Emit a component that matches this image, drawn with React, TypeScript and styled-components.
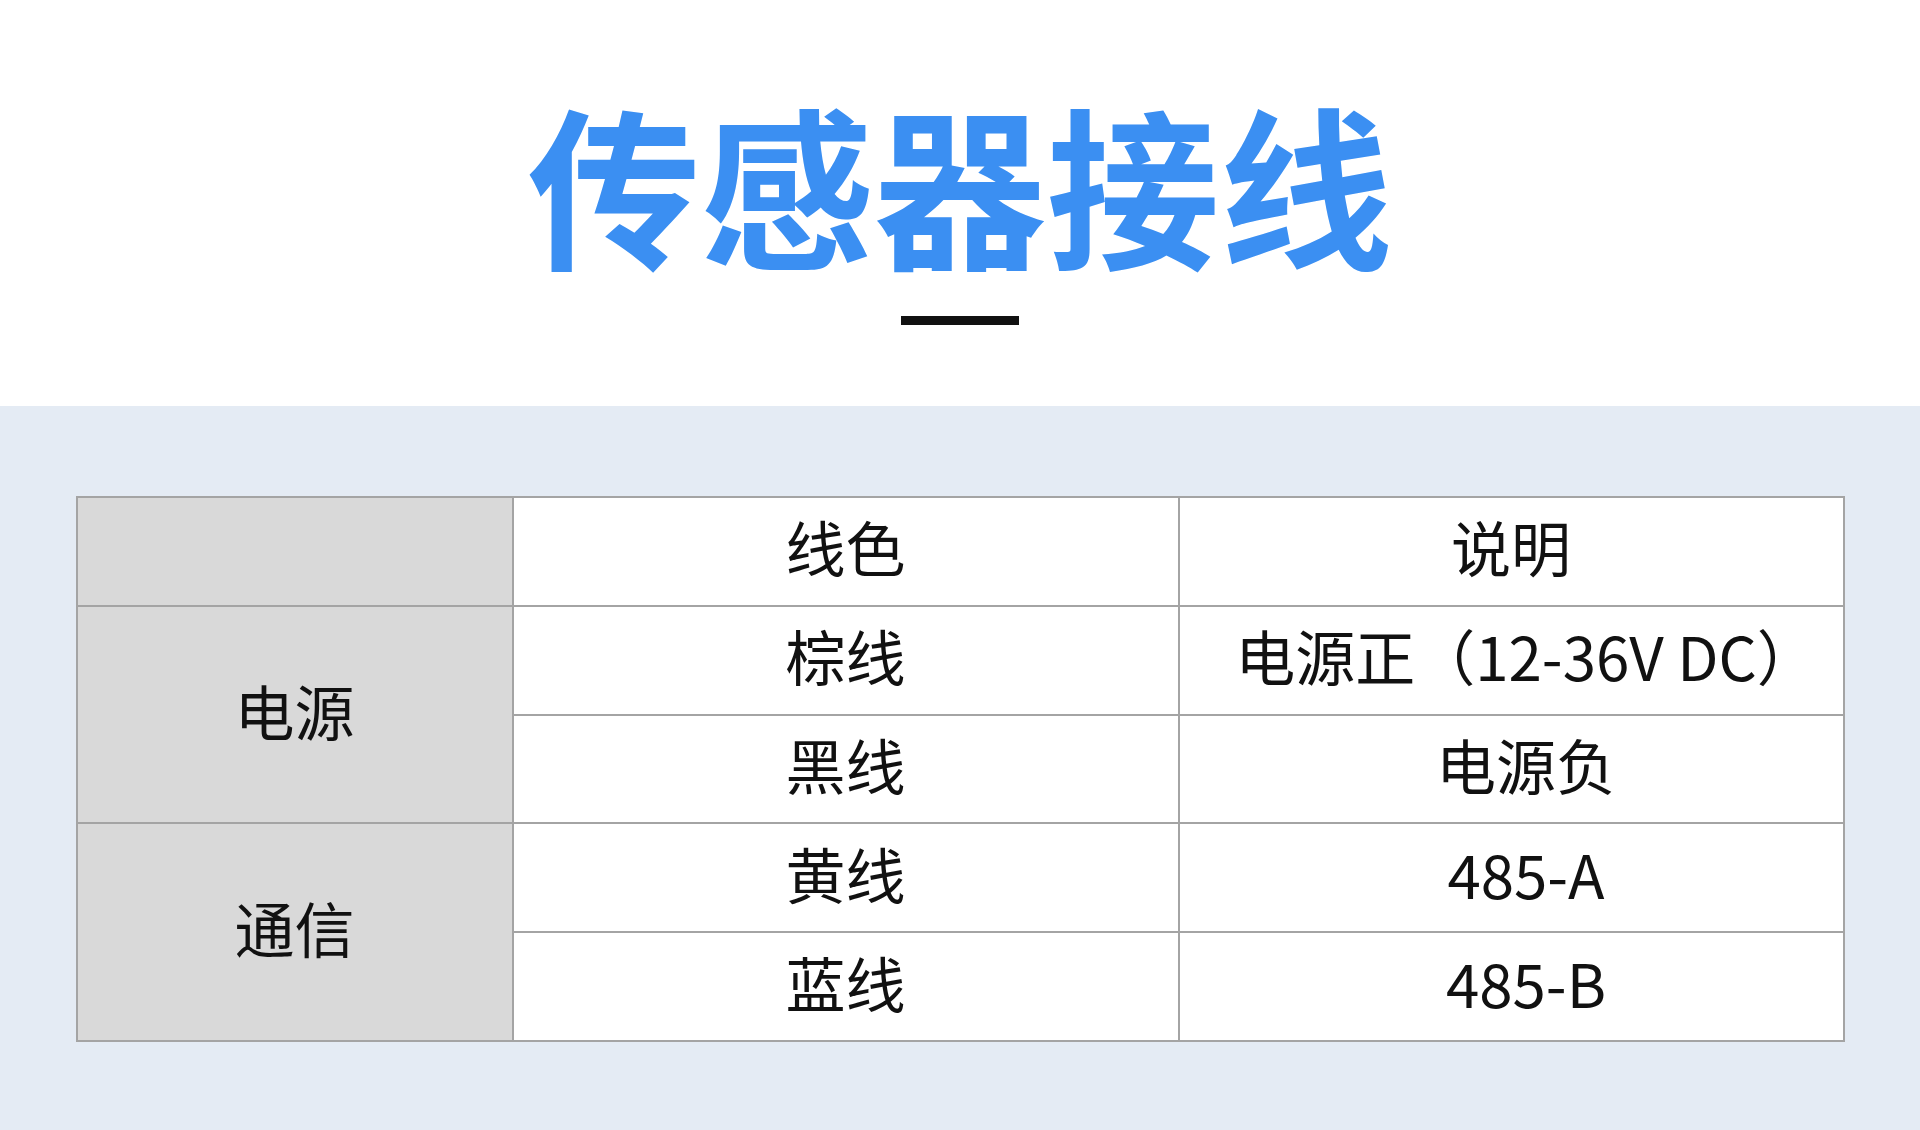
import React from 'react';
import styled, { createGlobalStyle } from 'styled-components';

const GlobalStyle = createGlobalStyle`
  html, body {
    margin: 0;
    padding: 0;
    background: #e4ebf4;
  }
  body {
    font-family: "Noto Sans CJK SC", "Noto Sans", sans-serif;
  }
`;

const Page = styled.div`
  width: 1920px;
  min-height: 1130px;
  display: flex;
  flex-direction: column;
`;

const Header = styled.header`
  height: 406px;
  background: #ffffff;
  display: flex;
  flex-direction: column;
  align-items: center;
  box-sizing: border-box;
  padding-top: 81px;
`;

const Title = styled.h1`
  margin: 0;
  font-size: 173px;
  line-height: 200px;
  font-weight: 700;
  color: #3b8ff2;
  letter-spacing: 0;
`;

const Underline = styled.div`
  width: 118px;
  height: 9px;
  margin-top: 35px;
  background: #111111;
`;

const Section = styled.section`
  flex: 1;
  background: #e4ebf4;
  padding: 90px 0 88px;
  display: flex;
  justify-content: center;
`;

const Table = styled.table`
  width: 1767px;
  border-collapse: collapse;
  border: 2px solid #a4a4a4;
  table-layout: fixed;
`;

const Cell = styled.td<{ $label?: boolean; $shift?: boolean }>`
  height: 107px;
  padding: 0 0 10px ${p => (p.$shift ? '30px' : '0')};
  box-sizing: border-box;
  border: 2px solid #a4a4a4;
  background: ${p => (p.$label ? '#d9d9d9' : '#ffffff')};
  color: #111111;
  font-size: 60px;
  font-weight: 400;
  text-align: center;
  vertical-align: middle;
  line-height: 1;
`;

const rows = [
  { group: '电源', span: 2, color: '棕线', note: '电源正（12-36V DC）' },
  { color: '黑线', note: '电源负' },
  { group: '通信', span: 2, color: '黄线', note: '485-A' },
  { color: '蓝线', note: '485-B' },
];

const App: React.FC = () => {
  return (
    <Page>
      <GlobalStyle />
      <Header>
        <Title>传感器接线</Title>
        <Underline />
      </Header>
      <Section>
        <Table>
          <colgroup>
            <col style={{ width: 436 }} />
            <col style={{ width: 666 }} />
            <col style={{ width: 665 }} />
          </colgroup>
          <tbody>
            <tr>
              <Cell $label />
              <Cell>线色</Cell>
              <Cell>说明</Cell>
            </tr>
            {rows.map((r, i) => (
              <tr key={i}>
                {r.group && (
                  <Cell $label rowSpan={r.span}>
                    {r.group}
                  </Cell>
                )}
                <Cell>{r.color}</Cell>
                <Cell $shift>{r.note}</Cell>
              </tr>
            ))}
          </tbody>
        </Table>
      </Section>
    </Page>
  );
};

export default App;
